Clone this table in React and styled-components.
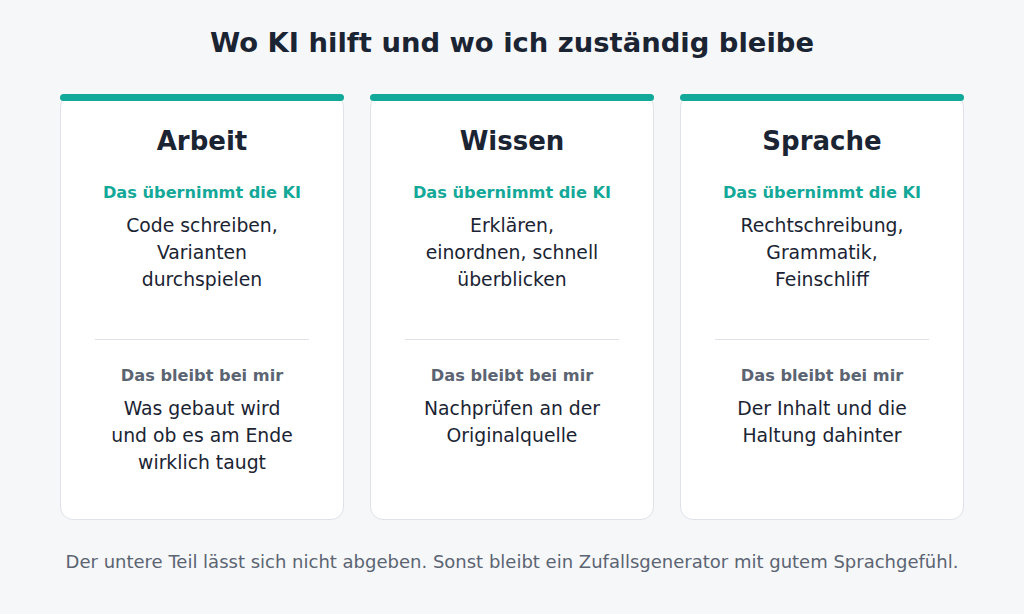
import React from "react";
import styled, { createGlobalStyle } from "styled-components";

const Global = createGlobalStyle`
  html, body { margin: 0; padding: 0; background: #f6f7f9; }
  body { font-family: "DejaVu Sans", "Noto Sans", sans-serif; color: #1b2433; }
`;

const Page = styled.div`
  width: 1024px;
  height: 614px;
  box-sizing: border-box;
  padding-top: 27px;
  display: flex;
  flex-direction: column;
  align-items: center;
`;

const Title = styled.h1`
  margin: 0;
  font-size: 27.4px;
  line-height: 32px;
  font-weight: 700;
  color: #1b2433;
`;

const Grid = styled.div`
  margin-top: 35px;
  width: 904px;
  display: grid;
  grid-template-columns: repeat(3, 1fr);
  gap: 26px;
`;

const Card = styled.section`
  position: relative;
  box-sizing: border-box;
  height: 426px;
  background: #ffffff;
  border: 1px solid #dfe2e8;
  border-radius: 13px;
  padding: 29px 34px 0;
  display: flex;
  flex-direction: column;
  align-items: center;
  text-align: center;
  &::before {
    content: "";
    position: absolute;
    top: -1px;
    left: -1px;
    right: -1px;
    height: 7px;
    border-radius: 3.5px;
    background: #12a89a;
  }
`;

const CardTitle = styled.h2`
  margin: 0;
  font-size: 26px;
  line-height: 34px;
  font-weight: 700;
  color: #1b2433;
`;

const Label = styled.div`
  margin-top: ${(p) => (p.$ai ? 24 : 25)}px;
  font-size: 16.2px;
  line-height: 22px;
  font-weight: 700;
  color: ${(p) => (p.$ai ? "#14a898" : "#5b6472")};
`;

const Body = styled.p`
  margin: 8px 0 0;
  max-width: 186px;
  font-size: 18.8px;
  line-height: 27px;
  color: #1b2433;
`;

const Top = styled.div`
  height: 181px;
  display: flex;
  flex-direction: column;
  align-items: center;
`;

const Divider = styled.hr`
  width: 100%;
  margin: 0;
  border: none;
  border-top: 1px solid #dfe2e8;
`;

const Footer = styled.p`
  margin: 30px 0 0;
  font-size: 18px;
  line-height: 24px;
  color: #5b6472;
  white-space: nowrap;
`;

const cards = [
  {
    title: "Arbeit",
    ai: "Code schreiben, Varianten durchspielen",
    me: "Was gebaut wird und ob es am Ende wirklich taugt",
  },
  {
    title: "Wissen",
    ai: "Erklären, einordnen, schnell überblicken",
    me: "Nachprüfen an der Originalquelle",
  },
  {
    title: "Sprache",
    ai: "Rechtschreibung, Grammatik, Feinschliff",
    me: "Der Inhalt und die Haltung dahinter",
  },
];

export default function App() {
  return (
    <>
      <Global />
      <Page>
        <Title>Wo KI hilft und wo ich zuständig bleibe</Title>
        <Grid>
          {cards.map((c) => (
            <Card key={c.title}>
              <CardTitle>{c.title}</CardTitle>
              <Top>
                <Label $ai>Das übernimmt die KI</Label>
                <Body>{c.ai}</Body>
              </Top>
              <Divider />
              <Label>Das bleibt bei mir</Label>
              <Body>{c.me}</Body>
            </Card>
          ))}
        </Grid>
        <Footer>
          Der untere Teil lässt sich nicht abgeben. Sonst bleibt ein Zufallsgenerator mit gutem Sprachgefühl.
        </Footer>
      </Page>
    </>
  );
}
